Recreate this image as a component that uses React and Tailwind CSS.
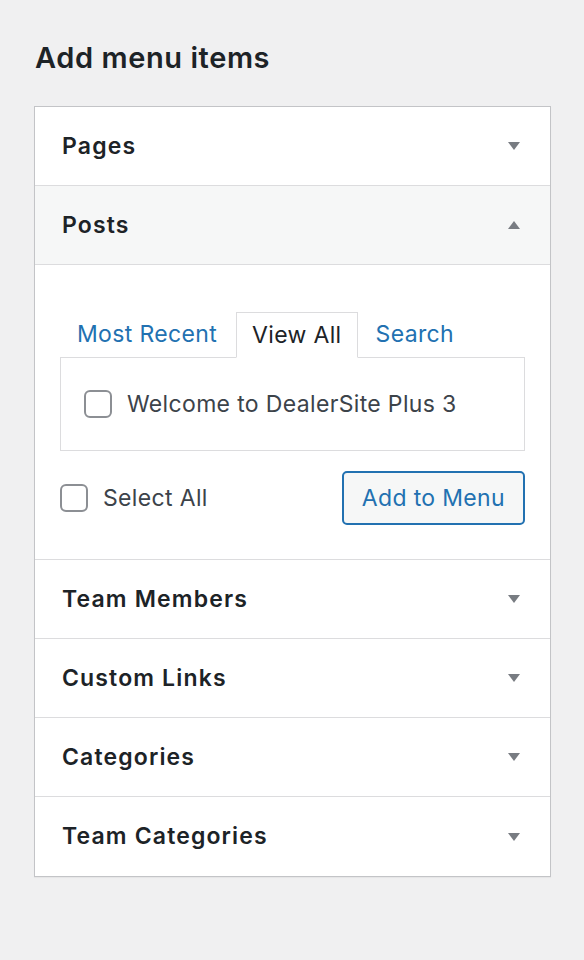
const sections = ["Team Members", "Custom Links", "Categories", "Team Categories"];

function Arrow({ up }) {
  return (
    <svg width="14" height="10" viewBox="0 0 14 10" className="text-[#787c82]">
      {up ? (
        <path d="M1 9 L7 1 L13 9 Z" fill="currentColor" />
      ) : (
        <path d="M1 1 L13 1 L7 9 Z" fill="currentColor" />
      )}
    </svg>
  );
}

function SectionHeader({ title, open, className = "" }) {
  return (
    <div
      className={`flex h-[79px] items-center justify-between border-b border-[#dcdcde] pl-[27px] pr-[29px] ${className}`}
    >
      <span className="text-[23px] font-semibold tracking-[0.05em] text-[#1d2327]">{title}</span>
      <Arrow up={open} />
    </div>
  );
}

function Checkbox({ className = "" }) {
  return (
    <span
      className={`inline-block h-[28px] w-[28px] rounded-[6px] border-2 border-[#8c8f94] bg-white ${className}`}
    />
  );
}

export default function App() {
  return (
    <div
      className="min-h-[960px] w-[584px] bg-[#f0f0f1] pt-[38px]"
      style={{ fontFamily: "Inter, 'Noto Sans', sans-serif" }}
    >
      <h2 className="ml-[35px] text-[29px] font-semibold leading-[40px] tracking-[0.02em] text-[#1d2327]">
        Add menu items
      </h2>

      <div className="ml-[34px] mt-[28px] w-[517px] border border-[#c3c4c7] bg-white shadow-[0_1px_1px_rgba(0,0,0,0.04)]">
        <SectionHeader title="Pages" />
        <SectionHeader title="Posts" open className="bg-[#f6f7f7]" />

        {/* posts panel */}
        <div className="border-b border-[#dcdcde] px-[25px] pb-[34px] pt-[47px]">
          <div className="flex items-end pl-[17px] text-[23px] leading-[34px] tracking-[0.015em]">
            <span className="pb-[6px] text-[#2271b1]">Most Recent</span>
            <span className="relative z-10 -mb-px ml-[19px] border border-b-white border-[#dcdcde] bg-white px-[15px] pb-[5px] pt-[5px] text-[#1d2327]">
              View All
            </span>
            <span className="ml-[18px] pb-[6px] text-[#2271b1]">Search</span>
          </div>
          <div className="flex h-[94px] items-center border border-[#dcdcde] pl-[23px]">
            <Checkbox />
            <span className="ml-[15px] text-[23px] tracking-[0.015em] text-[#3c434a]">
              Welcome to DealerSite Plus 3
            </span>
          </div>
          <div className="mt-[20px] flex items-center justify-between">
            <div className="flex items-center">
              <Checkbox />
              <span className="ml-[15px] text-[23px] tracking-[0.015em] text-[#3c434a]">Select All</span>
            </div>
            <button className="h-[54px] rounded-[5px] border-2 border-[#2271b1] bg-[#f6f7f7] px-[18px] text-[23px] tracking-[0.015em] text-[#2271b1]">
              Add to Menu
            </button>
          </div>
        </div>

        {sections.map((s, i) => (
          <SectionHeader
            key={s}
            title={s}
            className={i === sections.length - 1 ? "border-b-0" : ""}
          />
        ))}
      </div>
    </div>
  );
}
